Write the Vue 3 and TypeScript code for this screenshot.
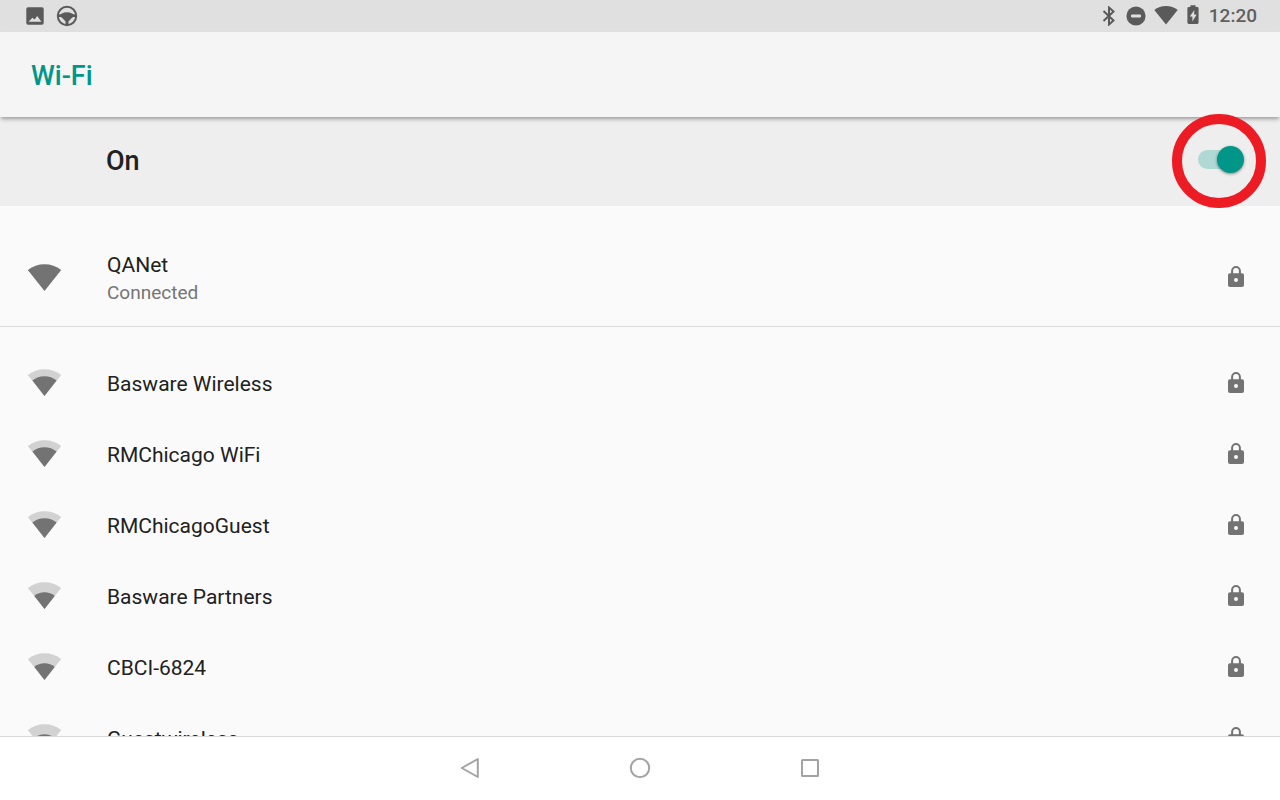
<script setup lang="ts">
import { ref } from 'vue'

type Level = 2 | 3 | 4

interface Network {
  name: string
  level: Level
}

const enabled = ref(true)
const connected: Network = { name: 'QANet', level: 4 }
const networks: Network[] = [
  { name: 'Basware Wireless', level: 3 },
  { name: 'RMChicago WiFi', level: 3 },
  { name: 'RMChicagoGuest', level: 3 },
  { name: 'Basware Partners', level: 2 },
  { name: 'CBCI-6824', level: 2 },
  { name: 'Guestwireless', level: 2 },
]

const fan: Record<Level, string> = {
  2: 'M16.5 27L6.3 13.9Q10.6 10.2 16.5 10.2T26.7 13.9Z',
  3: 'M16.5 27L4.4 11.5Q9.600 7.200 16.500 7.200T28.600 11.500Z',
  4: 'M16.5 27L-0.200 6.100Q7 0.300 16.500 0.300T33.200 6.100Z',
}
</script>

<template>
  <div class="screen">
    <header class="status">
      <div class="status-group">
        <svg width="18" height="18" viewBox="0 0 18 18" aria-hidden="true">
          <path fill="#5a5a5a" fill-rule="evenodd" d="M2 0.3H16Q17.7 0.3 17.7 2V16Q17.7 17.7 16 17.7H2Q0.3 17.7 0.3 16V2Q0.3 0.3 2 0.3ZM2.600 14.800H15.400L11.200 9L8.600 12.600L6.400 10.800Z" />
        </svg>
        <svg width="22" height="22" viewBox="0 0 22 22" aria-hidden="true">
          <circle cx="11" cy="11" r="9.2" fill="none" stroke="#5a5a5a" stroke-width="2" />
          <path fill="#5a5a5a" d="M2 9.800Q4.500 9.600 6 8.500Q8 7.200 11 7.200T16 8.500Q17.500 9.600 20 9.800V12H17.500Q16.600 12 16 12.800L12.500 16.400V20H9.500V16.400L6 12.800Q5.400 12 4.500 12H2Z" />
        </svg>
      </div>
      <div class="status-group right">
        <svg width="14" height="20" viewBox="0 0 14 20" aria-hidden="true">
          <path d="M1.500 5L11.500 14.500L7 18.500V1.500L11.500 5.500L1.500 15" fill="none" stroke="#5a5a5a" stroke-width="2" />
        </svg>
        <svg width="20" height="20" viewBox="0 0 20 20" aria-hidden="true">
          <circle cx="10" cy="10" r="9.600" fill="#5a5a5a" />
          <rect x="5" y="8.600" width="10" height="2.800" rx="0.800" fill="#e0e0e0" />
        </svg>
        <svg class="ic-wifi" width="24" height="20" viewBox="0 0 24 20" aria-hidden="true">
          <path fill="#5a5a5a" d="M12 18.400L0.300 4.100Q5.300 0.100 12 0.100T23.700 4.100Z" />
        </svg>
        <svg width="12" height="22" viewBox="0 0 12 22" aria-hidden="true">
          <path fill="#5a5a5a" d="M3.400 0.200H8.600V2H10.200Q11.600 2 11.600 3.400V17.600Q11.600 19 10.200 19H1.800Q0.400 19 0.400 17.600V3.400Q0.400 2 1.800 2H3.400Z" />
          <path fill="#e0e0e0" d="M7.400 5L2.800 11.400H5.400V16.600L9.600 9.600H7Z" />
        </svg>
        <time class="clock">12:20</time>
      </div>
    </header>

    <div class="titlebar"><h1>Wi-Fi</h1></div>

    <div class="switchbar">
      <label for="wifi-switch">On</label>
      <span class="switch-wrap">
        <input id="wifi-switch" v-model="enabled" class="switch" type="checkbox" role="switch" />
        <span class="ring" aria-hidden="true"></span>
      </span>
    </div>

    <main class="networks">
      <section class="current">
        <button type="button" class="row">
          <svg width="34" height="27" viewBox="0 0 34 27" aria-hidden="true">
            <path :d="fan[connected.level]" fill="#737373" />
          </svg>
          <span class="label">
            <span class="name">{{ connected.name }}</span>
            <span class="state">Connected</span>
          </span>
          <svg width="16" height="22" viewBox="0 0 16 22" aria-hidden="true">
            <path d="M4.100 8.500V5A3.900 3.900 0 0 1 11.900 5V8.500" fill="none" stroke="#737373" stroke-width="2" />
            <path fill="#737373" fill-rule="evenodd" d="M2 7.200H14Q16 7.200 16 9.200V19Q16 21 14 21H2Q0 21 0 19V9.200Q0 7.200 2 7.200ZM8 12A2 2 0 1 0 8 16A2 2 0 1 0 8 12Z" />
          </svg>
        </button>
      </section>
      <ul class="available">
        <li v-for="n in networks" :key="n.name">
          <button type="button" class="row">
            <svg width="34" height="27" viewBox="0 0 34 27" aria-hidden="true">
              <path :d="fan[4]" fill="#d2d2d2" />
              <path :d="fan[n.level]" fill="#737373" />
            </svg>
            <span class="label"><span class="name">{{ n.name }}</span></span>
            <svg width="16" height="22" viewBox="0 0 16 22" aria-hidden="true">
              <path d="M4.100 8.500V5A3.900 3.900 0 0 1 11.900 5V8.500" fill="none" stroke="#737373" stroke-width="2" />
              <path fill="#737373" fill-rule="evenodd" d="M2 7.200H14Q16 7.200 16 9.200V19Q16 21 14 21H2Q0 21 0 19V9.200Q0 7.200 2 7.200ZM8 12A2 2 0 1 0 8 16A2 2 0 1 0 8 12Z" />
            </svg>
          </button>
        </li>
      </ul>
    </main>

    <nav class="navbar" aria-label="System navigation">
      <button type="button" aria-label="Back">
        <svg width="22" height="22" viewBox="0 0 22 22" aria-hidden="true">
          <path d="M18.800 2V20L2.800 11Z" fill="none" stroke="#a3a3a3" stroke-width="2" stroke-linejoin="round" />
        </svg>
      </button>
      <button type="button" aria-label="Home">
        <svg width="22" height="22" viewBox="0 0 22 22" aria-hidden="true">
          <circle cx="11" cy="11" r="9.200" fill="none" stroke="#a3a3a3" stroke-width="2" />
        </svg>
      </button>
      <button type="button" aria-label="Recent apps">
        <svg width="22" height="22" viewBox="0 0 22 22" aria-hidden="true">
          <rect x="3" y="3" width="16" height="16" rx="0.500" fill="none" stroke="#a3a3a3" stroke-width="2" />
        </svg>
      </button>
    </nav>
  </div>
</template>

<style>
body {
  margin: 0;
}
</style>

<style scoped>
.screen {
  display: flex;
  flex-direction: column;
  height: 100vh;
  overflow: hidden;
  background: #fafafa;
  color: #212121;
  font-family: Roboto, "Liberation Sans", sans-serif;
}
svg {
  display: block;
  flex: none;
}
button {
  padding: 0;
  border: 0;
  background: none;
  color: inherit;
  font: inherit;
  text-align: left;
  cursor: pointer;
}
.status {
  display: flex;
  flex: none;
  align-items: center;
  justify-content: space-between;
  height: 32px;
  padding: 0 23px 0 26px;
  background: #e0e0e0;
}
.status-group {
  display: flex;
  align-items: center;
  gap: 12px;
}
.right {
  gap: 10px;
}
.ic-wifi {
  margin-right: -1px;
  margin-left: -2px;
}
.clock {
  color: #5f5f5f;
  font-size: 19px;
  font-weight: 500;
  line-height: 32px;
}
.titlebar {
  z-index: 1;
  display: flex;
  flex: none;
  align-items: center;
  box-sizing: border-box;
  height: 85px;
  padding: 2px 31px 0;
  background: #f5f5f5;
  box-shadow: 0 3px 4px -1px rgba(0, 0, 0, 0.35);
}
h1 {
  margin: 0;
  color: #009688;
  font-size: 27px;
  font-weight: 500;
  line-height: 32px;
}
.switchbar {
  display: flex;
  flex: none;
  align-items: center;
  justify-content: space-between;
  box-sizing: border-box;
  height: 89px;
  padding: 0 35px 4px 106px;
  background: #eeeeee;
}
.switchbar label {
  padding-top: 2px;
  font-size: 27px;
  font-weight: 500;
  line-height: 32px;
}
.switch-wrap {
  position: relative;
  display: flex;
}
.switch {
  position: relative;
  width: 47px;
  height: 27px;
  margin: 0;
  appearance: none;
  cursor: pointer;
}
.switch::before {
  position: absolute;
  top: 4px;
  left: 0;
  width: 42px;
  height: 19px;
  border-radius: 10px;
  background: #bdbdbd;
  content: "";
}
.switch::after {
  position: absolute;
  top: 0;
  left: 0;
  width: 27px;
  height: 27px;
  border-radius: 50%;
  background: #fafafa;
  box-shadow: 0 1px 3px rgba(0, 0, 0, 0.45);
  content: "";
}
.switch:checked::before {
  background: #b0d8d4;
}
.switch:checked::after {
  left: 19px;
  background: #009688;
}
.ring {
  position: absolute;
  top: -32px;
  left: -26px;
  z-index: 2;
  box-sizing: border-box;
  width: 94px;
  height: 94px;
  border: 10px solid #ed1c24;
  border-radius: 50%;
  pointer-events: none;
}
.networks {
  flex: 1;
  min-height: 0;
  overflow: hidden;
}
.current {
  padding: 22px 0 0;
  border-bottom: 1px solid #dadada;
}
.row {
  display: flex;
  align-items: center;
  box-sizing: border-box;
  width: 100%;
  height: 71px;
  padding: 0 36px 0 28px;
}
.current .row {
  height: 98px;
}
.label {
  display: flex;
  flex: 1;
  flex-direction: column;
  margin-left: 45px;
  padding-top: 3px;
}
.name {
  font-size: 21px;
  line-height: 28px;
}
.state {
  color: #757575;
  font-size: 19px;
  line-height: 28px;
}
.available {
  margin: 0;
  padding: 20px 0 0;
  list-style: none;
}
.navbar {
  display: flex;
  flex: none;
  justify-content: center;
  height: 62px;
  padding-bottom: 1px;
  border-top: 1px solid #dadada;
  background: #ffffff;
}
.navbar button {
  display: flex;
  align-items: center;
  justify-content: center;
  width: 170px;
}
</style>
